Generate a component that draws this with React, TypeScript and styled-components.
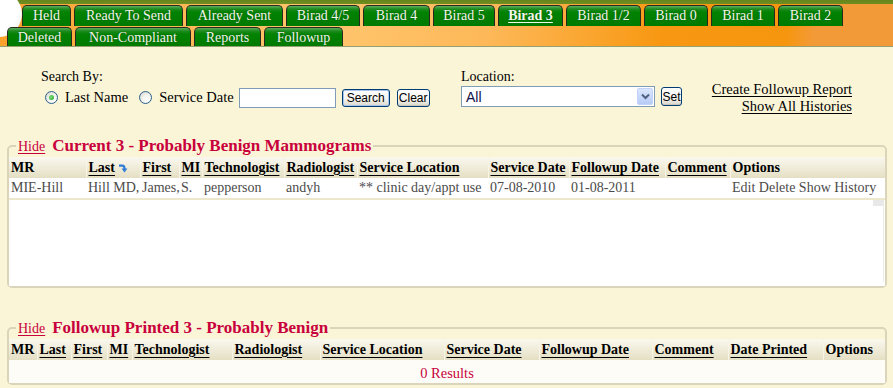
import React from "react";
import styled, { createGlobalStyle } from "styled-components";

const GlobalStyle = createGlobalStyle`
  html, body { margin: 0; padding: 0; }
  body {
    background: #fbf5d8;
    font-family: "Liberation Serif", "Times New Roman", serif;
    font-size: 14px;
    color: #000;
  }
`;

const RED = "#c8003c";

const Header = styled.div`
  position: relative;
  height: 47px;
  box-sizing: border-box;
  padding-top: 5px;
  border-bottom: 1px solid #93a070;
  overflow: hidden;
  background:
    linear-gradient(#66861c, #6e8d22) 0 0 / 100% 4px no-repeat,
    linear-gradient(100deg, #f8a12a 0%, #fdb24c 14%, #ffc66e 36%, #fdb858 55%, #f89812 74%, #f6960f 88%, #f39a38 91%, #f39a38 100%);
`;

const LogoArc = styled.span`
  position: absolute;
  z-index: 0;
  display: block;
  left: -24px;
  top: -9px;
  width: 46px;
  height: 46px;
  border-radius: 50%;
  background: radial-gradient(circle at 35% 40%, #ffffff 62%, #e6e5df 100%);
`;

const TabRow = styled.div<{ $indent: number; $height: number; $after?: number }>`
  position: relative;
  z-index: 1;
  display: flex;
  gap: 3px;
  padding-left: ${(p) => p.$indent}px;
  height: ${(p) => p.$height}px;
  margin-bottom: ${(p) => p.$after ?? 0}px;
`;

const Tab = styled.a<{ $w: number; $active?: boolean }>`
  width: ${(p) => p.$w}px;
  box-sizing: border-box;
  display: flex;
  align-items: center;
  justify-content: center;
  border: 1px solid #272b1d;
  border-bottom: none;
  border-radius: 5px 5px 0 0;
  background: linear-gradient(#5fae5f 0, #1f8c1f 3px, #038203 6px, #007a00 100%);
  color: #f0fbe8;
  font-size: 14px;
  text-shadow: 0 0 1px #0a3a0a;
  font-weight: ${(p) => (p.$active ? "bold" : "normal")};
  text-decoration: ${(p) => (p.$active ? "underline" : "none")};
  text-underline-offset: 2px;
  white-space: nowrap;
  cursor: pointer;
`;

const Toolbar = styled.div`
  display: flex;
  align-items: flex-start;
  height: 88px;
  box-sizing: border-box;
  padding: 22px 41px 0 41px;
`;

const FieldGroup = styled.div<{ $w?: number; $gap: number }>`
  display: flex;
  flex-direction: column;
  gap: ${(p) => p.$gap}px;
  width: ${(p) => (p.$w ? `${p.$w}px` : "auto")};
`;

const FieldLabel = styled.div`
  line-height: 16px;
  font-size: 14px;
`;

const ControlRow = styled.div`
  display: flex;
  align-items: center;
  height: 21px;
`;

const RadioOption = styled.label<{ $after: number }>`
  display: flex;
  align-items: center;
  gap: 7px;
  margin-left: 4px;
  margin-right: ${(p) => p.$after}px;
  font-size: 14.5px;
  white-space: nowrap;
`;

const Radio = styled.span<{ $checked?: boolean }>`
  width: 13px;
  height: 13px;
  box-sizing: border-box;
  border-radius: 50%;
  border: 1px solid #2a5f8e;
  background: radial-gradient(circle at 65% 70%, #ffffff 0, #f2f2ee 45%, #d2d2ca 100%);
  display: inline-flex;
  align-items: center;
  justify-content: center;

  &::after {
    content: "";
    width: 5px;
    height: 5px;
    border-radius: 50%;
    background: radial-gradient(circle at 40% 40%, #7ee07e, #1f9c1f);
    display: ${(p) => (p.$checked ? "block" : "none")};
  }
`;

const TextBox = styled.input`
  width: 97px;
  height: 20px;
  box-sizing: border-box;
  border: 1px solid #7f9db9;
  background: #fff;
  margin: 0 6px 0 2px;
  padding: 0 3px;
  outline: none;
`;

const XPButton = styled.button<{ $w: number; $h: number; $default?: boolean; $after?: number }>`
  width: ${(p) => p.$w}px;
  height: ${(p) => p.$h}px;
  box-sizing: border-box;
  padding: 0;
  margin-right: ${(p) => p.$after ?? 0}px;
  font-family: "Liberation Sans", Arial, sans-serif;
  font-size: 12px;
  color: #000;
  border: 1px solid #003c74;
  border-radius: 3px;
  background: linear-gradient(#ffffff 0%, #f5f4ef 55%, #d9d7cc 100%);
  box-shadow: ${(p) => (p.$default ? "inset 0 0 0 1px #a9c4ec" : "inset 0 -1px 0 #c9c6b8")};
  cursor: pointer;
`;

const SelectBox = styled.div`
  width: 194px;
  height: 21px;
  box-sizing: border-box;
  border: 1px solid #7f9db9;
  background: #fff;
  display: flex;
  align-items: center;
  justify-content: space-between;
  padding: 0 1px 0 4px;
  margin-right: 6px;
  font-family: "Liberation Sans", Arial, sans-serif;
  font-size: 14px;
  color: #10104a;
`;

const SelectArrow = styled.span`
  width: 16px;
  height: 17px;
  box-sizing: border-box;
  border: 1px solid #c3d3fd;
  border-radius: 2px;
  background: linear-gradient(#dbe6fc, #b7cbf5);
  display: flex;
  align-items: center;
  justify-content: center;
`;

const LinkStack = styled.div`
  margin-left: auto;
  margin-top: 12px;
  display: flex;
  flex-direction: column;
  align-items: flex-end;
  line-height: 17px;
`;

const PlainLink = styled.a`
  color: #000;
  font-size: 14.5px;
  text-decoration: underline;
  text-underline-offset: 2px;
  cursor: pointer;
`;

const Panel = styled.fieldset<{ $top: number }>`
  margin: ${(p) => p.$top}px 6px 0 7px;
  padding: 0;
  min-width: 0;
  border: 2px solid #dad5ba;
  border-radius: 5px;
`;

const Legend = styled.legend`
  margin-left: 7px;
  padding: 0 2px;
  line-height: 21px;
  white-space: nowrap;
`;

const HideLink = styled.a`
  color: ${RED};
  font-size: 14px;
  text-decoration: underline;
  text-underline-offset: 2px;
  margin-right: 7px;
  cursor: pointer;
`;

const PanelTitle = styled.span`
  color: ${RED};
  font-weight: bold;
  font-size: 17px;
`;

const TableArea = styled.div<{ $h: number; $bg: string }>`
  position: relative;
  height: ${(p) => p.$h}px;
  background: ${(p) => p.$bg};
  overflow: hidden;
`;

const ScrollGhost = styled.span`
  position: absolute;
  right: 1px;
  top: 43px;
  width: 10px;
  height: 82px;
  border-right: 1px solid #ecebe6;
  background: linear-gradient(#e8e8e8, #e8e8e8) 0 0 / 100% 6px no-repeat;
`;

const Grid = styled.table`
  width: 100%;
  table-layout: fixed;
  border-collapse: collapse;
`;

const HeadCell = styled.th<{ $link?: boolean }>`
  text-align: left;
  font-weight: bold;
  font-size: 14px;
  height: 21px;
  padding: 0 2px;
  white-space: nowrap;
  overflow: hidden;
  background: linear-gradient(#faf8ef, #e4dfc3);
  border-left: 1px solid #f7f4e6;
  text-decoration: ${(p) => (p.$link ? "underline" : "none")};
  text-underline-offset: 3px;

  &:first-child {
    border-left: none;
  }
`;

const Cell = styled.td`
  font-size: 14px;
  color: #4b4b4b;
  height: 20px;
  padding: 0 2px;
  white-space: nowrap;
  border-bottom: 2px solid #ede8cc;
`;

const EmptyCell = styled.td`
  text-align: center;
  color: ${RED};
  font-size: 14.5px;
  height: 24px;
`;

const SortIcon = styled.svg`
  margin-left: 3px;
  vertical-align: -1px;
`;

type Col = { label: string; w: number; link?: boolean; sort?: boolean };

const currentCols: Col[] = [
  { label: "MR", w: 77 },
  { label: "Last", w: 54, link: true, sort: true },
  { label: "First", w: 39, link: true },
  { label: "MI", w: 23, link: true },
  { label: "Technologist", w: 82, link: true },
  { label: "Radiologist", w: 73, link: true },
  { label: "Service Location", w: 131, link: true },
  { label: "Service Date", w: 81, link: true },
  { label: "Followup Date", w: 96, link: true },
  { label: "Comment", w: 65, link: true },
  { label: "Options", w: 155 },
];

const printedCols: Col[] = [
  { label: "MR", w: 28 },
  { label: "Last", w: 34, link: true },
  { label: "First", w: 36, link: true },
  { label: "MI", w: 25, link: true },
  { label: "Technologist", w: 100, link: true },
  { label: "Radiologist", w: 88, link: true },
  { label: "Service Location", w: 124, link: true },
  { label: "Service Date", w: 95, link: true },
  { label: "Followup Date", w: 113, link: true },
  { label: "Comment", w: 76, link: true },
  { label: "Date Printed", w: 95, link: true },
  { label: "Options", w: 62 },
];

const currentRows = [
  [
    "MIE-Hill",
    "Hill MD,",
    "James,",
    "S.",
    "pepperson",
    "andyh",
    "** clinic day/appt use",
    "07-08-2010",
    "01-08-2011",
    "",
    "Edit Delete Show History",
  ],
];

const tabsTop = [
  { label: "Held", w: 49 },
  { label: "Ready To Send", w: 109 },
  { label: "Already Sent", w: 97 },
  { label: "Birad 4/5", w: 74 },
  { label: "Birad 4", w: 67 },
  { label: "Birad 5", w: 62 },
  { label: "Birad 3", w: 65, active: true },
  { label: "Birad 1/2", w: 75 },
  { label: "Birad 0", w: 64 },
  { label: "Birad 1", w: 64 },
  { label: "Birad 2", w: 65 },
];

const tabsBottom = [
  { label: "Deleted", w: 65 },
  { label: "Non-Compliant", w: 116 },
  { label: "Reports", w: 67 },
  { label: "Followup", w: 79 },
];

const SortArrow = () => (
  <SortIcon width="10" height="10" viewBox="0 0 10 10">
    <path d="M1 2.6 H4.3 Q6.4 2.6 6.4 5 V6" stroke="#2f7bd6" strokeWidth="2.2" fill="none" />
    <path d="M3.6 5.4 H9.4 L6.5 9.6 Z" fill="#2f7bd6" />
  </SortIcon>
);

const HeaderRow = ({ cols }: { cols: Col[] }) => (
  <thead>
    <tr>
      {cols.map((c) => (
        <HeadCell key={c.label} $link={c.link}>
          {c.label}
          {c.sort && <SortArrow />}
        </HeadCell>
      ))}
    </tr>
  </thead>
);

const ColWidths = ({ cols }: { cols: Col[] }) => (
  <colgroup>
    {cols.map((c) => (
      <col key={c.label} style={{ width: c.w }} />
    ))}
  </colgroup>
);

export default function App() {
  return (
    <>
      <GlobalStyle />
      <Header>
        <LogoArc />
        <TabRow $indent={22} $height={21} $after={1}>
          {tabsTop.map((t) => (
            <Tab key={t.label} $w={t.w} $active={t.active}>
              {t.label}
            </Tab>
          ))}
        </TabRow>
        <TabRow $indent={7} $height={20}>
          {tabsBottom.map((t) => (
            <Tab key={t.label} $w={t.w}>
              {t.label}
            </Tab>
          ))}
        </TabRow>
      </Header>

      <Toolbar>
        <FieldGroup $w={420} $gap={2}>
          <FieldLabel>Search By:</FieldLabel>
          <ControlRow>
            <RadioOption $after={7}>
              <Radio $checked />
              Last Name
            </RadioOption>
            <RadioOption $after={3}>
              <Radio />
              Service Date
            </RadioOption>
            <TextBox type="text" />
            <XPButton $w={48} $h={18} $default $after={7}>
              Search
            </XPButton>
            <XPButton $w={33} $h={18}>
              Clear
            </XPButton>
          </ControlRow>
        </FieldGroup>

        <FieldGroup $gap={1}>
          <FieldLabel>Location:</FieldLabel>
          <ControlRow>
            <SelectBox>
              <span>All</span>
              <SelectArrow>
                <svg width="9" height="7" viewBox="0 0 9 7">
                  <path d="M1 1.5 L4.5 5 L8 1.5" stroke="#4d6185" strokeWidth="2" fill="none" />
                </svg>
              </SelectArrow>
            </SelectBox>
            <XPButton $w={21} $h={19}>
              Set
            </XPButton>
          </ControlRow>
        </FieldGroup>

        <LinkStack>
          <PlainLink>Create Followup Report</PlainLink>
          <PlainLink>Show All Histories</PlainLink>
        </LinkStack>
      </Toolbar>

      <Panel $top={0}>
        <Legend>
          <HideLink>Hide</HideLink>
          <PanelTitle>Current 3 - Probably Benign Mammograms</PanelTitle>
        </Legend>
        <TableArea $h={129} $bg="#ffffff">
          <Grid>
            <ColWidths cols={currentCols} />
            <HeaderRow cols={currentCols} />
            <tbody>
              {currentRows.map((row, i) => (
                <tr key={i}>
                  {row.map((v, j) => (
                    <Cell key={j}>{v}</Cell>
                  ))}
                </tr>
              ))}
            </tbody>
          </Grid>
          <ScrollGhost />
        </TableArea>
      </Panel>

      <Panel $top={29}>
        <Legend>
          <HideLink>Hide</HideLink>
          <PanelTitle>Followup Printed 3 - Probably Benign</PanelTitle>
        </Legend>
        <TableArea $h={44} $bg="#fdfcf7">
          <Grid>
            <ColWidths cols={printedCols} />
            <HeaderRow cols={printedCols} />
            <tbody>
              <tr>
                <EmptyCell colSpan={printedCols.length}>0 Results</EmptyCell>
              </tr>
            </tbody>
          </Grid>
        </TableArea>
      </Panel>
    </>
  );
}
